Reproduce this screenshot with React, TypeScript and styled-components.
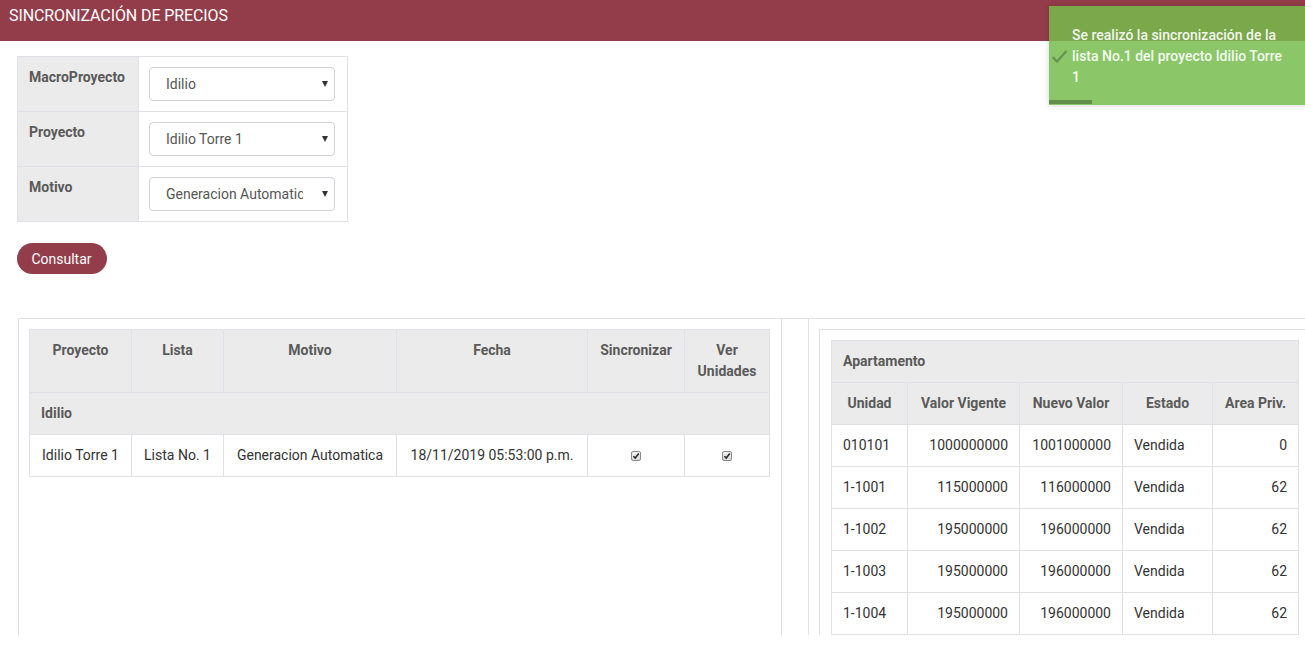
import React from "react";
import styled, { createGlobalStyle } from "styled-components";

const GlobalStyle = createGlobalStyle`
  html, body {
    margin: 0;
    padding: 0;
    overflow: hidden;
    background: #ffffff;
  }
  body {
    font-family: Roboto, "Liberation Sans", Arial, sans-serif;
    font-size: 14px;
    color: #333333;
  }
  * { box-sizing: border-box; }
`;

const Page = styled.div`
  width: 1305px;
  height: 648px;
  position: relative;
  overflow: hidden;
`;

const Header = styled.header`
  height: 41px;
  background: #943d4a;
  color: #ffffff;
  font-size: 16px;
  line-height: 20px;
  padding: 6px 9px 0;
  letter-spacing: -0.1px;
`;

const Content = styled.main`
  padding: 15px 0 0 17px;
`;

const FormTable = styled.table`
  border-collapse: collapse;
  width: 331px;
  border: 1px solid #dfe1e6;
`;

const FormRow = styled.tr`
  border-bottom: 1px solid #dfe1e6;
  &:last-child { border-bottom: none; }
`;

const FormLabel = styled.th`
  width: 123px;
  background: #ebebeb;
  border-right: 1px solid #dfe1e6;
  text-align: left;
  vertical-align: top;
  padding: 10px 11px;
  font-weight: 700;
  color: #5a5a5a;
  line-height: 21px;
  height: 55px;
`;

const FormField = styled.td`
  padding: 10px 12px 10px 10px;
  vertical-align: top;
`;

const SelectBox = styled.div`
  width: 186px;
  height: 34px;
  border: 1px solid #cfd2d6;
  border-radius: 4px;
  background: #ffffff;
  display: flex;
  align-items: center;
  padding: 0 6px 0 16px;
  font-size: 14px;
  color: #555555;
`;

const SelectValue = styled.span`
  flex: 1;
  min-width: 0;
  overflow: hidden;
  white-space: nowrap;
  margin-right: 19px;
`;

const Arrow = styled.span`
  flex: none;
  width: 0;
  height: 0;
  margin-top: -1px;
  border-left: 3.5px solid transparent;
  border-right: 3.5px solid transparent;
  border-top: 6px solid #333333;
`;

const ConsultButton = styled.button`
  margin-top: 21px;
  width: 90px;
  height: 31px;
  border: none;
  border-radius: 16px;
  background: #943d4a;
  color: #ffffff;
  font-family: Roboto, "Liberation Sans", Arial, sans-serif;
  font-size: 14px;
  padding: 0 1px 0 0;
  display: block;
`;

const Results = styled.section`
  margin: 44px 0 0 1px;
  width: 1300px;
  height: 317px;
  border-top: 1px solid #dfe1e6;
  display: flex;
  align-items: stretch;
  overflow: hidden;
`;

const LeftColumn = styled.div`
  flex: none;
  width: 764px;
  border-left: 1px solid #dfe1e6;
  border-right: 1px solid #dfe1e6;
  padding: 10px 11px 0 10px;
`;

const RightColumn = styled.div`
  flex: none;
  margin-left: 26px;
  border-left: 1px solid #dfe1e6;
  padding: 10px 0 0 10px;
  width: 520px;
`;

const InnerBox = styled.div`
  border-top: 1px solid #dfe1e6;
  border-left: 1px solid #dfe1e6;
  padding: 10px 0 0 11px;
  height: 100%;
`;

const DataTable = styled.table<{ $width: number }>`
  border-collapse: collapse;
  table-layout: fixed;
  width: ${(p) => p.$width}px;
  line-height: 21px;
  font-size: 14px;
`;

const Col = styled.col<{ $w: number }>`
  width: ${(p) => p.$w}px;
`;

const HeadCell = styled.th<{ $align?: string }>`
  background: #ebebeb;
  border: 1px solid #dfe1e6;
  font-weight: 700;
  color: #5a5a5a;
  padding: 10px 11px;
  text-align: ${(p) => p.$align || "center"};
  vertical-align: top;
`;

const Cell = styled.td<{ $align?: string }>`
  border: 1px solid #dfe1e6;
  padding: 10px 11px;
  color: #333333;
  text-align: ${(p) => p.$align || "center"};
  vertical-align: top;
  white-space: nowrap;
`;

const CheckBox = styled.span`
  display: inline-block;
  width: 10px;
  height: 10px;
  margin-top: 1px;
  vertical-align: top;
`;

const Toast = styled.div`
  position: absolute;
  top: 6px;
  left: 1049px;
  width: 260px;
  height: 99px;
  background: rgba(117, 188, 75, 0.84);
  box-shadow: 0 0 6px rgba(0, 0, 0, 0.18);
  display: flex;
  align-items: center;
  padding: 2px 14px 0 2px;
`;

const ToastIcon = styled.span`
  flex: none;
  width: 17px;
  height: 15px;
  margin-right: 4px;
  display: flex;
`;

const ToastMessage = styled.div`
  width: 215px;
  color: rgba(255, 255, 255, 0.92);
  font-weight: 500;
  font-size: 14px;
  line-height: 21px;
`;

const ToastProgress = styled.div`
  position: absolute;
  left: 0;
  bottom: 1px;
  width: 43px;
  height: 4px;
  background: rgba(0, 0, 0, 0.28);
`;

const Check = () => (
  <CheckBox>
    <svg width="10" height="10" viewBox="0 0 10 10">
      <defs>
        <linearGradient id="cbg" x1="0" y1="0" x2="0" y2="1">
          <stop offset="0" stopColor="#f4f4f4" />
          <stop offset="1" stopColor="#d8d8d8" />
        </linearGradient>
      </defs>
      <rect x="0.5" y="0.5" width="9" height="9" rx="1.5" fill="url(#cbg)" stroke="#8a8a8a" />
      <path d="M2.4 5.2 L4.2 7 L7.8 2.6" fill="none" stroke="#2a2a2a" strokeWidth="1.6" />
    </svg>
  </CheckBox>
);

const formRows = [
  { label: "MacroProyecto", value: "Idilio" },
  { label: "Proyecto", value: "Idilio Torre 1" },
  { label: "Motivo", value: "Generacion Automatica" },
];

const units = [
  ["010101", "1000000000", "1001000000", "Vendida", "0"],
  ["1-1001", "115000000", "116000000", "Vendida", "62"],
  ["1-1002", "195000000", "196000000", "Vendida", "62"],
  ["1-1003", "195000000", "196000000", "Vendida", "62"],
  ["1-1004", "195000000", "196000000", "Vendida", "62"],
];

export default function App() {
  return (
    <Page>
      <GlobalStyle />
      <Header>SINCRONIZACIÓN DE PRECIOS</Header>
      <Content>
        <FormTable>
          <tbody>
            {formRows.map((r) => (
              <FormRow key={r.label}>
                <FormLabel>{r.label}</FormLabel>
                <FormField>
                  <SelectBox role="combobox">
                    <SelectValue>{r.value}</SelectValue>
                    <Arrow />
                  </SelectBox>
                </FormField>
              </FormRow>
            ))}
          </tbody>
        </FormTable>
        <ConsultButton>Consultar</ConsultButton>
        <Results>
          <LeftColumn>
            <DataTable $width={740}>
              <colgroup>
                <Col $w={102} />
                <Col $w={92} />
                <Col $w={173} />
                <Col $w={191} />
                <Col $w={97} />
                <Col $w={85} />
              </colgroup>
              <thead>
                <tr>
                  <HeadCell>Proyecto</HeadCell>
                  <HeadCell>Lista</HeadCell>
                  <HeadCell>Motivo</HeadCell>
                  <HeadCell>Fecha</HeadCell>
                  <HeadCell>Sincronizar</HeadCell>
                  <HeadCell>Ver Unidades</HeadCell>
                </tr>
              </thead>
              <tbody>
                <tr>
                  <HeadCell colSpan={6} $align="left">Idilio</HeadCell>
                </tr>
                <tr>
                  <Cell>Idilio Torre 1</Cell>
                  <Cell>Lista No. 1</Cell>
                  <Cell>Generacion Automatica</Cell>
                  <Cell>18/11/2019 05:53:00 p.m.</Cell>
                  <Cell><Check /></Cell>
                  <Cell><Check /></Cell>
                </tr>
              </tbody>
            </DataTable>
          </LeftColumn>
          <RightColumn>
            <InnerBox>
              <DataTable $width={467}>
                <colgroup>
                  <Col $w={76} />
                  <Col $w={112} />
                  <Col $w={103} />
                  <Col $w={90} />
                  <Col $w={86} />
                </colgroup>
                <thead>
                  <tr>
                    <HeadCell colSpan={5} $align="left">Apartamento</HeadCell>
                  </tr>
                  <tr>
                    <HeadCell>Unidad</HeadCell>
                    <HeadCell>Valor Vigente</HeadCell>
                    <HeadCell>Nuevo Valor</HeadCell>
                    <HeadCell>Estado</HeadCell>
                    <HeadCell>Area Priv.</HeadCell>
                  </tr>
                </thead>
                <tbody>
                  {units.map((u) => (
                    <tr key={u[0]}>
                      <Cell $align="left">{u[0]}</Cell>
                      <Cell $align="right">{u[1]}</Cell>
                      <Cell $align="right">{u[2]}</Cell>
                      <Cell $align="left">{u[3]}</Cell>
                      <Cell $align="right">{u[4]}</Cell>
                    </tr>
                  ))}
                </tbody>
              </DataTable>
            </InnerBox>
          </RightColumn>
        </Results>
      </Content>
      <Toast>
        <ToastIcon>
          <svg width="17" height="15" viewBox="0 0 17 15">
            <path d="M1.5 8 L6 12.5 L15.5 2" fill="none" stroke="rgba(95,140,80,0.85)" strokeWidth="2.4" />
          </svg>
        </ToastIcon>
        <ToastMessage>
          Se realizó la sincronización de la lista No.1 del proyecto Idilio Torre 1
        </ToastMessage>
        <ToastProgress />
      </Toast>
    </Page>
  );
}
